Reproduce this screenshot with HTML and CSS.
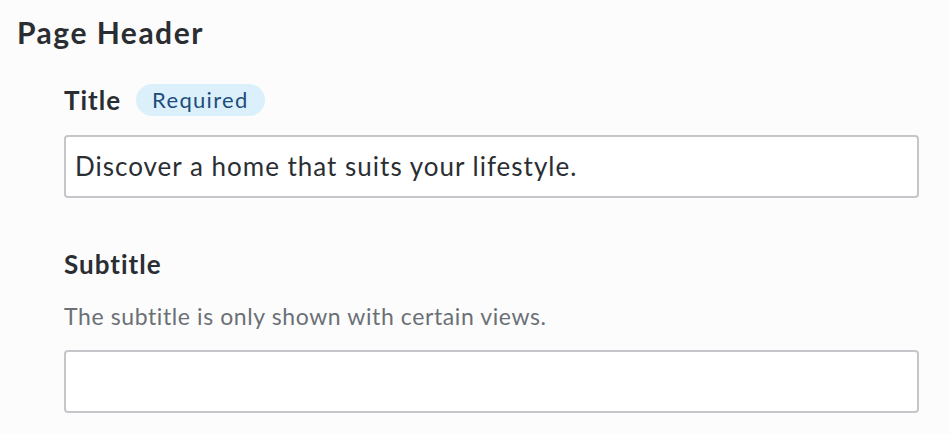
FILE: index.html
```html
<!DOCTYPE html>
<html>
<head>
<meta charset="utf-8">
<link rel="stylesheet" href="styles.css">
</head>
<body>
<div class="page">
  <h1 class="page-title">Page Header</h1>
  <div class="fields">
    <div class="field">
      <div class="label-row">
        <span class="label">Title</span>
        <span class="badge">Required</span>
      </div>
      <div class="input">Discover a home that suits your lifestyle.</div>
    </div>
    <div class="field field-second">
      <div class="label-row">
        <span class="label">Subtitle</span>
      </div>
      <div class="help">The subtitle is only shown with certain views.</div>
      <div class="input"></div>
    </div>
  </div>
</div>
</body>
</html>
```
FILE: styles.css
```css
html, body {
  margin: 0;
  padding: 0;
  background: #fcfcfc;
}
body {
  font-family: Lato, "Noto Sans", sans-serif;
  color: #2a2e33;
  width: 950px;
  height: 434px;
  overflow: hidden;
}
.page {
  padding: 13px 31px 0 17px;
}
.page-title {
  margin: 0;
  font-size: 30px;
  letter-spacing: 1.5px;
  font-weight: 700;
  line-height: 38px;
}
.fields {
  padding-left: 47px;
  display: flex;
  flex-direction: column;
}
.field {
  display: flex;
  flex-direction: column;
}
.label-row {
  display: flex;
  align-items: center;
  gap: 15px;
  height: 32px;
  margin-top: 33px;
}
.label {
  font-size: 26px;
  letter-spacing: 1px;
  font-weight: 700;
}
.badge {
  background: #dcf0fc;
  color: #1e4d7a;
  font-size: 22px;
  letter-spacing: 1.3px;
  height: 32px;
  line-height: 32px;
  padding: 0 16px;
  border-radius: 16px;
}
.input {
  margin-top: 19px;
  height: 59px;
  border: 2px solid #c5c5ca;
  border-radius: 4px;
  background: #fff;
  font-size: 26px;
  letter-spacing: 1px;
  line-height: 59px;
  padding-left: 9px;
}
.field-second .label-row {
  margin-top: 50px;
}
.help {
  margin-top: 22px;
  font-size: 23px;
  letter-spacing: 0.6px;
  color: #6b7075;
  line-height: 28px;
}
.field-second .input {
  margin-top: 20px;
}
```
